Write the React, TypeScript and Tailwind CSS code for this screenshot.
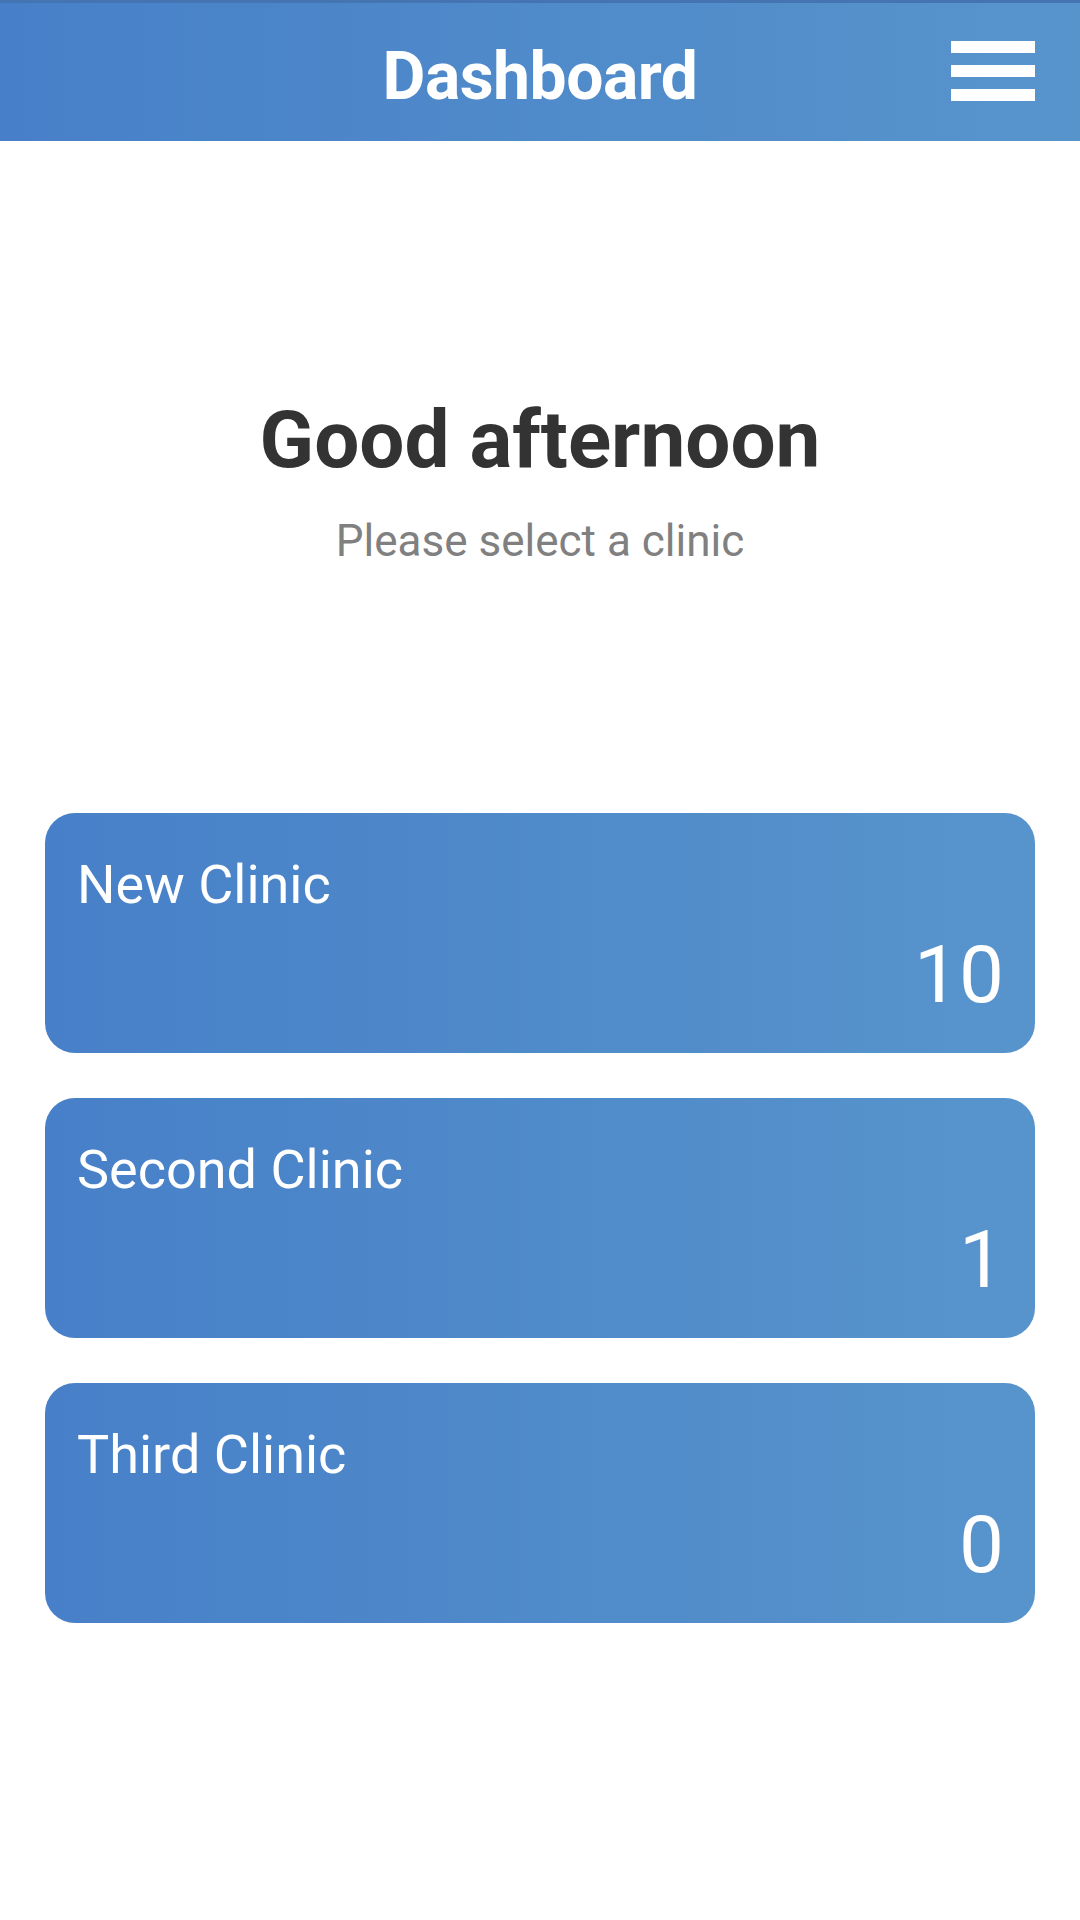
import React from "react";

const clinics = [
  { name: "New Clinic", count: 10 },
  { name: "Second Clinic", count: 1 },
  { name: "Third Clinic", count: 0 },
];

export default function App() {
  return (
    <div className="w-[1080px] h-[1920px] bg-white font-['Roboto','Liberation_Sans',sans-serif]">
      <header className="relative h-[141px] border-t-[3px] border-[#4474b1] bg-gradient-to-r from-[#4780c8] to-[#5894cc] flex justify-center pt-[9px] items-center">
        <h1 className="text-white font-bold text-[66px] leading-none tracking-[-0.5px]">Dashboard</h1>
        <button className="absolute right-[45px] top-[38px] flex flex-col gap-[12px]" aria-label="Menu">
          <span className="block w-[84px] h-[12px] bg-white" />
          <span className="block w-[84px] h-[12px] bg-white" />
          <span className="block w-[84px] h-[12px] bg-white" />
        </button>
      </header>

      <section className="flex flex-col items-center pt-[259px]">
        <h2 className="text-[#333333] font-bold text-[80px] leading-none">Good afternoon</h2>
        <p className="mt-[39px] text-[#808080] text-[44px] leading-none">Please select a clinic</p>
      </section>

      <main className="mt-[250px] px-[45px] flex flex-col gap-[45px]">
        {clinics.map((c) => (
          <div
            key={c.name}
            className="h-[240px] rounded-[30px] bg-gradient-to-r from-[#4780c8] to-[#5894cc] pl-[32px] pr-[31px] pt-[45px] flex flex-col text-white"
          >
            <div className="text-[54px] leading-none">{c.name}</div>
            <div className="mt-[23px] text-right text-[80px] leading-none">{c.count}</div>
          </div>
        ))}
      </main>
    </div>
  );
}
